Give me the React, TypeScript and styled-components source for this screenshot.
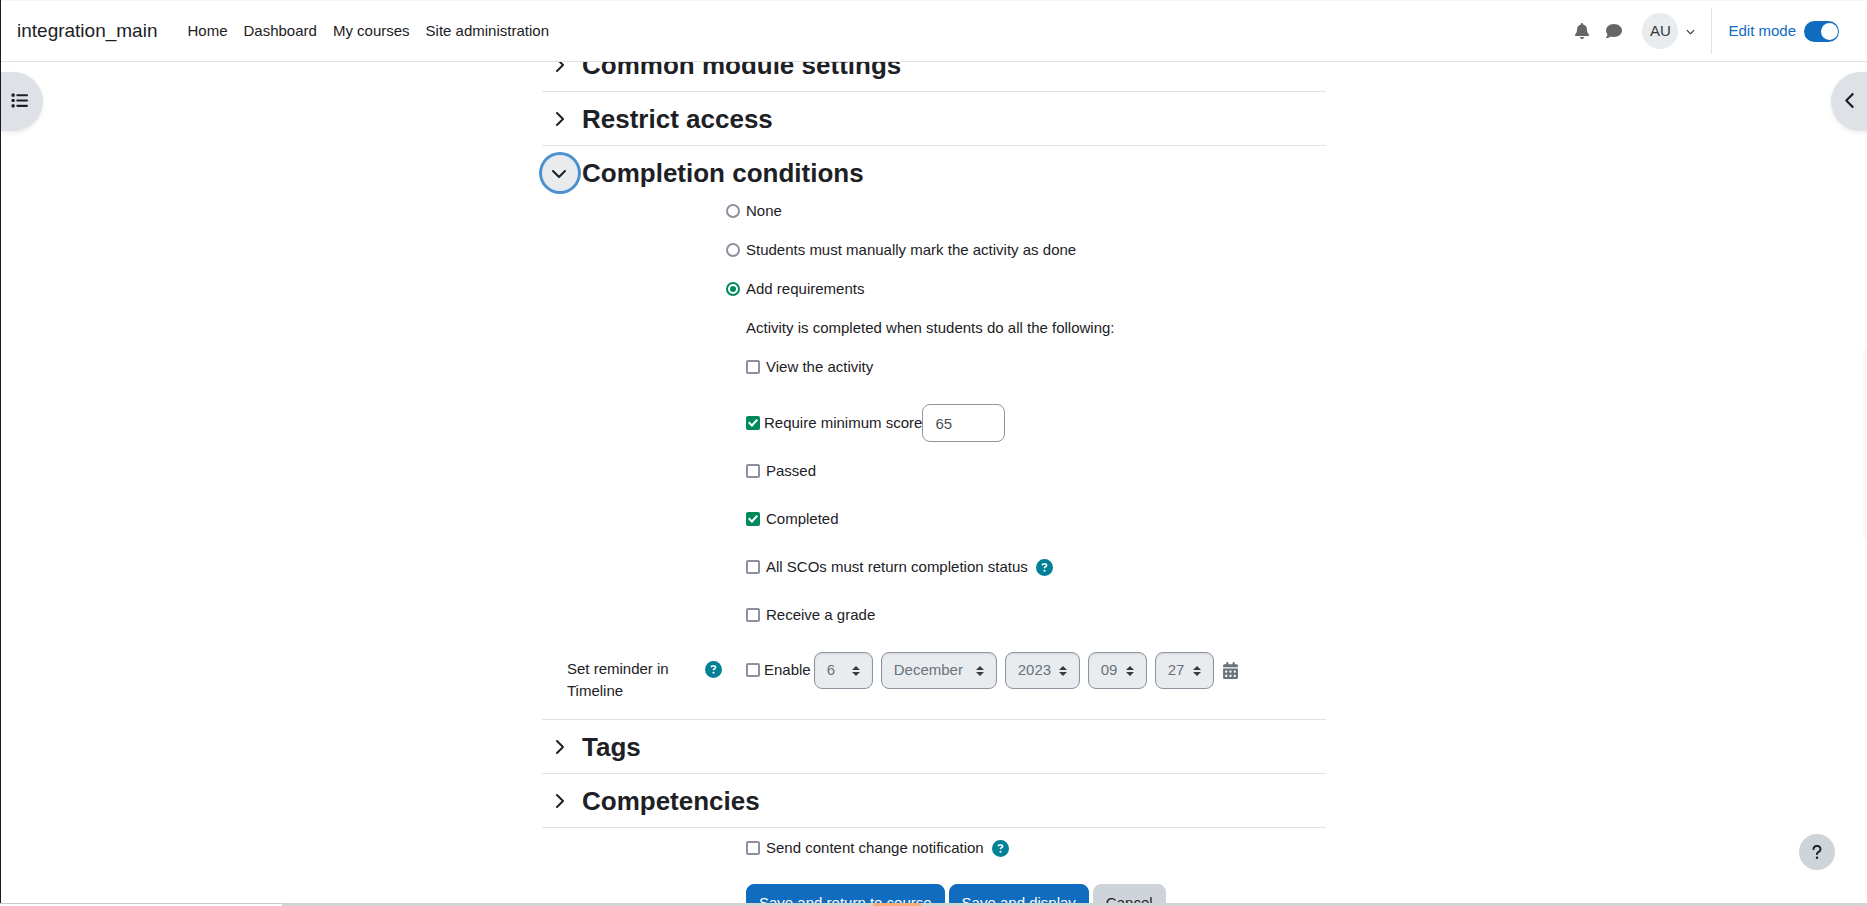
import React from "react";
import styled, { createGlobalStyle, css } from "styled-components";
import {
  FaBell,
  FaCalendarDays,
  FaChevronDown,
  FaChevronLeft,
  FaChevronRight,
  FaCircleQuestion,
  FaComment,
  FaList,
  FaQuestion,
} from "react-icons/fa6";

const GlobalStyle = createGlobalStyle`
  *, *::before, *::after { box-sizing: border-box; }
  body {
    margin: 0;
    background: #fff;
    color: #1d2125;
    font: 400 15px/22px "Liberation Sans", Arial, sans-serif;
  }
  button, input, select { font: inherit; margin: 0; }
`;

const Page = styled.div`
  height: 100vh;
  overflow: hidden;
  border-left: 1px solid #1c1c20;
`;

/* ---------- top bar ---------- */

const Navbar = styled.header`
  position: fixed;
  top: 0;
  left: 1px;
  right: 0;
  z-index: 2;
  display: flex;
  align-items: center;
  height: 62px;
  padding: 0 28px 0 16px;
  background: #fff;
  border-top: 1px solid #f6f6f6;
  border-bottom: 1px solid #dee2e6;
`;

const Brand = styled.a`
  margin-right: 30px;
  font-size: 19px;
  color: #1d2125;
  text-decoration: none;
`;

const NavLinks = styled.nav`
  display: flex;
  gap: 16px;
`;

const NavLink = styled.a`
  color: #1d2125;
  text-decoration: none;
`;

const UserTools = styled.div`
  display: flex;
  align-items: center;
  height: 46px;
  margin-left: auto;
`;

const IconButton = styled.button`
  display: flex;
  align-items: center;
  justify-content: center;
  width: 32px;
  height: 36px;
  padding: 0;
  border: 0;
  background: none;
  color: #666;
`;

const UserMenu = styled.button`
  display: flex;
  align-items: center;
  gap: 8px;
  margin-left: 12px;
  padding: 0;
  border: 0;
  background: none;
  color: #343a40;
`;

const Avatar = styled.span`
  display: flex;
  align-items: center;
  justify-content: center;
  width: 36px;
  height: 36px;
  border-radius: 50%;
  background: #e9ecef;
`;

const EditMode = styled.label`
  display: flex;
  align-items: center;
  gap: 8px;
  height: 46px;
  margin-left: 16px;
  padding-left: 16px;
  border-left: 1px solid #dee2e6;
  color: #0f6cbf;
`;

const Switch = styled.input`
  appearance: none;
  display: flex;
  align-items: center;
  width: 35px;
  height: 21px;
  padding: 0 1px;
  border-radius: 11px;
  background: #8f959e;

  &::before {
    content: "";
    width: 17px;
    height: 17px;
    border-radius: 50%;
    background: #fff;
  }
  &:checked {
    justify-content: flex-end;
    background: #0f6cbf;
  }
`;

/* ---------- floating controls ---------- */

const DrawerToggle = styled.button<{ $side: "left" | "right" }>`
  position: fixed;
  top: 72px;
  z-index: 1;
  display: flex;
  align-items: center;
  height: 59px;
  padding: 0 0 3px;
  border: 0;
  background: #dee2e6;
  color: #1d2125;
  box-shadow: 0 2px 4px rgba(0, 0, 0, 0.08);
  ${(p) =>
    p.$side === "left"
      ? css`
          left: 1px;
          width: 42px;
          padding-left: 10px;
          border-radius: 0 30px 30px 0;
        `
      : css`
          right: 0;
          width: 36px;
          padding-left: 11px;
          border-radius: 30px 0 0 30px;
        `}
`;

const FooterHelp = styled.button`
  position: fixed;
  right: 32px;
  bottom: 36px;
  display: flex;
  align-items: center;
  justify-content: center;
  width: 36px;
  height: 36px;
  padding: 0;
  border: 0;
  border-radius: 50%;
  background: #ced4da;
  color: #1d2125;
`;

const ScrollHint = styled.div`
  position: fixed;
  top: 349px;
  right: 1px;
  width: 3px;
  height: 190px;
  background: #f7f7f7;
`;

const StatusEdge = styled.div`
  position: fixed;
  left: 0;
  right: 0;
  bottom: 0;
  z-index: 3;
  display: flex;
  height: 3px;
  background: #d3d3d3;
`;

const StatusBlank = styled.div`
  width: 282px;
  border-top: 1px solid #c8c8c8;
  background: #fff;
`;

const StatusMark = styled.div`
  width: 48px;
  margin-left: 591px;
  background: #f7ae7c;
`;

/* ---------- form ---------- */

const Form = styled.form`
  max-width: 784px;
  margin: 0 auto;
  padding-top: 38px;
`;

const Section = styled.section`
  border-bottom: 1px solid #dee2e6;
`;

const SectionHead = styled.div`
  display: flex;
  align-items: center;
  gap: 4px;
  height: 53px;
`;

const Toggle = styled.button<{ $focused?: boolean }>`
  display: flex;
  align-items: center;
  justify-content: center;
  width: 36px;
  height: 36px;
  padding: 0 2px 0 0;
  border: 0;
  border-radius: 50%;
  background: ${(p) => (p.$focused ? "#e9ecef" : "none")};
  box-shadow: ${(p) => (p.$focused ? "0 0 0 3px #4b91cf" : "none")};
  color: #1d2125;
`;

const Heading = styled.h3`
  margin: 0;
  font-size: 26px;
  line-height: 32px;
  font-weight: 700;
`;

const Body = styled.div`
  padding: 1px 0 17px;
`;

const Options = styled.div`
  display: flex;
  flex-direction: column;
  gap: 17px;
  padding-left: 184px;
`;

const Indented = styled.div`
  padding-left: 20px;
`;

const Rules = styled.div`
  display: flex;
  flex-direction: column;
  gap: 10px;
  padding: 26px 0 17px 204px;
`;

const Rule = styled.div`
  display: flex;
  align-items: center;
  min-height: 38px;
`;

const Choice = styled.label<{ $tight?: boolean }>`
  display: flex;
  align-items: center;
  gap: ${(p) => (p.$tight ? 4 : 6)}px;
`;

const controlBox = css`
  appearance: none;
  display: flex;
  align-items: center;
  justify-content: center;
  flex: none;
  width: 14px;
  height: 14px;
  border: 2px solid #8f8f9d;
  background: #fff;
`;

const Radio = styled.input`
  ${controlBox}
  border-radius: 50%;

  &:checked {
    border-color: #008a5c;
  }
  &:checked::before {
    content: "";
    width: 6px;
    height: 6px;
    border-radius: 50%;
    background: #008a5c;
  }
`;

const Checkbox = styled.input`
  ${controlBox}
  border-radius: 2px;

  &:checked {
    border-color: #008a5c;
    background: #008a5c;
  }
  &:checked::before {
    content: "";
    flex: none;
    width: 10px;
    height: 8px;
    background: #fff;
    clip-path: polygon(0 50%, 14% 32%, 38% 62%, 85% 0, 100% 16%, 40% 100%);
  }
`;

const ScoreInput = styled.input`
  width: 83px;
  height: 38px;
  padding: 0 12px;
  border: 1px solid #8f959e;
  border-radius: 8px;
  background: #fff;
  color: #495057;
`;

const HelpButton = styled.button`
  display: flex;
  flex: none;
  padding: 0;
  border: 0;
  background: none;
  color: #008196;
`;

const WithHelp = styled.div`
  display: flex;
  align-items: center;
  gap: 8px;
`;

const Field = styled.div`
  display: grid;
  grid-template-columns: 155px 1fr;
  column-gap: 24px;
  padding-left: 25px;
`;

const FieldLabel = styled.div`
  display: flex;
  justify-content: space-between;
  align-items: flex-start;
  gap: 24px;
  padding-top: 7px;
`;

const LabelHelp = styled.div`
  display: flex;
  align-items: center;
  height: 22px;
`;

const DateRow = styled.div`
  display: flex;
  align-items: center;
  gap: 8px;
  height: 38px;
`;

const EnableGroup = styled.div`
  display: flex;
  align-items: center;
  gap: 3px;
`;

const SelectWrap = styled.span<{ $width: number }>`
  position: relative;
  display: flex;
  width: ${(p) => p.$width}px;

  svg {
    position: absolute;
    top: 14px;
    right: 13px;
    pointer-events: none;
  }
`;

const Select = styled.select`
  appearance: none;
  width: 100%;
  height: 37px;
  padding: 0 12px;
  border: 1px solid #8f959e;
  border-radius: 8px;
  background: #e9ecef;
  box-shadow: inset 0 1px 2px rgba(0, 0, 0, 0.1);
  color: #6a737b;
  opacity: 1;
`;

const CalendarLink = styled.a`
  display: flex;
  color: #6a737b;
`;

const Actions = styled.div`
  padding: 9px 0 24px 204px;
`;

const ButtonRow = styled.div`
  display: flex;
  gap: 4px;
  margin-top: 25px;
`;

const Button = styled.button<{ $secondary?: boolean }>`
  height: 38px;
  padding: 0 12px;
  border: 1px solid ${(p) => (p.$secondary ? "#ced4da" : "#0f6cbf")};
  border-radius: 8px;
  background: ${(p) => (p.$secondary ? "#ced4da" : "#0f6cbf")};
  color: ${(p) => (p.$secondary ? "#1d2125" : "#fff")};
  white-space: nowrap;
`;

function Help({ about }: { about: string }) {
  return (
    <HelpButton type="button" aria-label={`Help with ${about}`}>
      <FaCircleQuestion size={17} />
    </HelpButton>
  );
}

function DateSelect({ name, value, width }: { name: string; value: string; width: number }) {
  return (
    <SelectWrap $width={width}>
      <Select aria-label={name} defaultValue={value} disabled>
        <option>{value}</option>
      </Select>
      <svg width="8" height="10" viewBox="0 0 8 10" fill="#343a40" aria-hidden="true">
        <path d="M4 0 8 4H0ZM0 6h8L4 10Z" />
      </svg>
    </SelectWrap>
  );
}

function CollapsedSection({ title }: { title: string }) {
  return (
    <Section>
      <SectionHead>
        <Toggle type="button" aria-expanded={false} aria-label={`Expand ${title}`}>
          <FaChevronRight size={16} />
        </Toggle>
        <Heading>{title}</Heading>
      </SectionHead>
    </Section>
  );
}

function Check({ label, checked, tight }: { label: string; checked?: boolean; tight?: boolean }) {
  return (
    <Choice $tight={tight}>
      <Checkbox type="checkbox" defaultChecked={checked} />
      {label}
    </Choice>
  );
}

export default function App() {
  return (
    <Page>
      <GlobalStyle />
      <Navbar>
        <Brand href="#">integration_main</Brand>
        <NavLinks>
          <NavLink href="#">Home</NavLink>
          <NavLink href="#">Dashboard</NavLink>
          <NavLink href="#">My courses</NavLink>
          <NavLink href="#">Site administration</NavLink>
        </NavLinks>
        <UserTools>
          <IconButton type="button" aria-label="Notifications">
            <FaBell size={16} />
          </IconButton>
          <IconButton type="button" aria-label="Messages">
            <FaComment size={16} />
          </IconButton>
          <UserMenu type="button" aria-label="User menu">
            <Avatar>AU</Avatar>
            <FaChevronDown size={9} />
          </UserMenu>
          <EditMode>
            Edit mode
            <Switch type="checkbox" role="switch" defaultChecked />
          </EditMode>
        </UserTools>
      </Navbar>

      <DrawerToggle $side="left" type="button" aria-label="Open course index">
        <FaList size={17} />
      </DrawerToggle>
      <DrawerToggle $side="right" type="button" aria-label="Open block drawer">
        <FaChevronLeft size={17} />
      </DrawerToggle>

      <main>
        <Form onSubmit={(e) => e.preventDefault()}>
          <CollapsedSection title="Common module settings" />
          <CollapsedSection title="Restrict access" />

          <Section>
            <SectionHead>
              <Toggle $focused type="button" aria-expanded aria-label="Collapse Completion conditions">
                <FaChevronDown size={16} />
              </Toggle>
              <Heading>Completion conditions</Heading>
            </SectionHead>
            <Body>
              <Options>
                <Choice>
                  <Radio type="radio" name="completion" />
                  None
                </Choice>
                <Choice>
                  <Radio type="radio" name="completion" />
                  Students must manually mark the activity as done
                </Choice>
                <Choice>
                  <Radio type="radio" name="completion" defaultChecked />
                  Add requirements
                </Choice>
                <Indented>Activity is completed when students do all the following:</Indented>
                <Indented>
                  <Check label="View the activity" />
                </Indented>
              </Options>
              <Rules>
                <Rule>
                  <Check label="Require minimum score" checked tight />
                  <ScoreInput type="text" aria-label="Minimum score" defaultValue="65" />
                </Rule>
                <Rule>
                  <Check label="Passed" />
                </Rule>
                <Rule>
                  <Check label="Completed" checked />
                </Rule>
                <Rule>
                  <WithHelp>
                    <Check label="All SCOs must return completion status" />
                    <Help about="All SCOs must return completion status" />
                  </WithHelp>
                </Rule>
                <Rule>
                  <Check label="Receive a grade" />
                </Rule>
              </Rules>
              <Field>
                <FieldLabel>
                  <span>Set reminder in Timeline</span>
                  <LabelHelp>
                    <Help about="Set reminder in Timeline" />
                  </LabelHelp>
                </FieldLabel>
                <DateRow>
                  <EnableGroup>
                    <Check label="Enable" tight />
                    <DateSelect name="Day" value="6" width={59} />
                  </EnableGroup>
                  <DateSelect name="Month" value="December" width={116} />
                  <DateSelect name="Year" value="2023" width={75} />
                  <DateSelect name="Hour" value="09" width={59} />
                  <DateSelect name="Minute" value="27" width={59} />
                  <CalendarLink href="#" aria-label="Calendar">
                    <FaCalendarDays size={17} />
                  </CalendarLink>
                </DateRow>
              </Field>
            </Body>
          </Section>

          <CollapsedSection title="Tags" />
          <CollapsedSection title="Competencies" />

          <Actions>
            <WithHelp>
              <Check label="Send content change notification" />
              <Help about="Send content change notification" />
            </WithHelp>
            <ButtonRow>
              <Button type="submit">Save and return to course</Button>
              <Button type="submit">Save and display</Button>
              <Button type="button" $secondary>
                Cancel
              </Button>
            </ButtonRow>
          </Actions>
        </Form>
      </main>

      <FooterHelp type="button" aria-label="Show footer">
        <FaQuestion size={16} />
      </FooterHelp>
      <ScrollHint />
      <StatusEdge>
        <StatusBlank />
        <StatusMark />
      </StatusEdge>
    </Page>
  );
}
